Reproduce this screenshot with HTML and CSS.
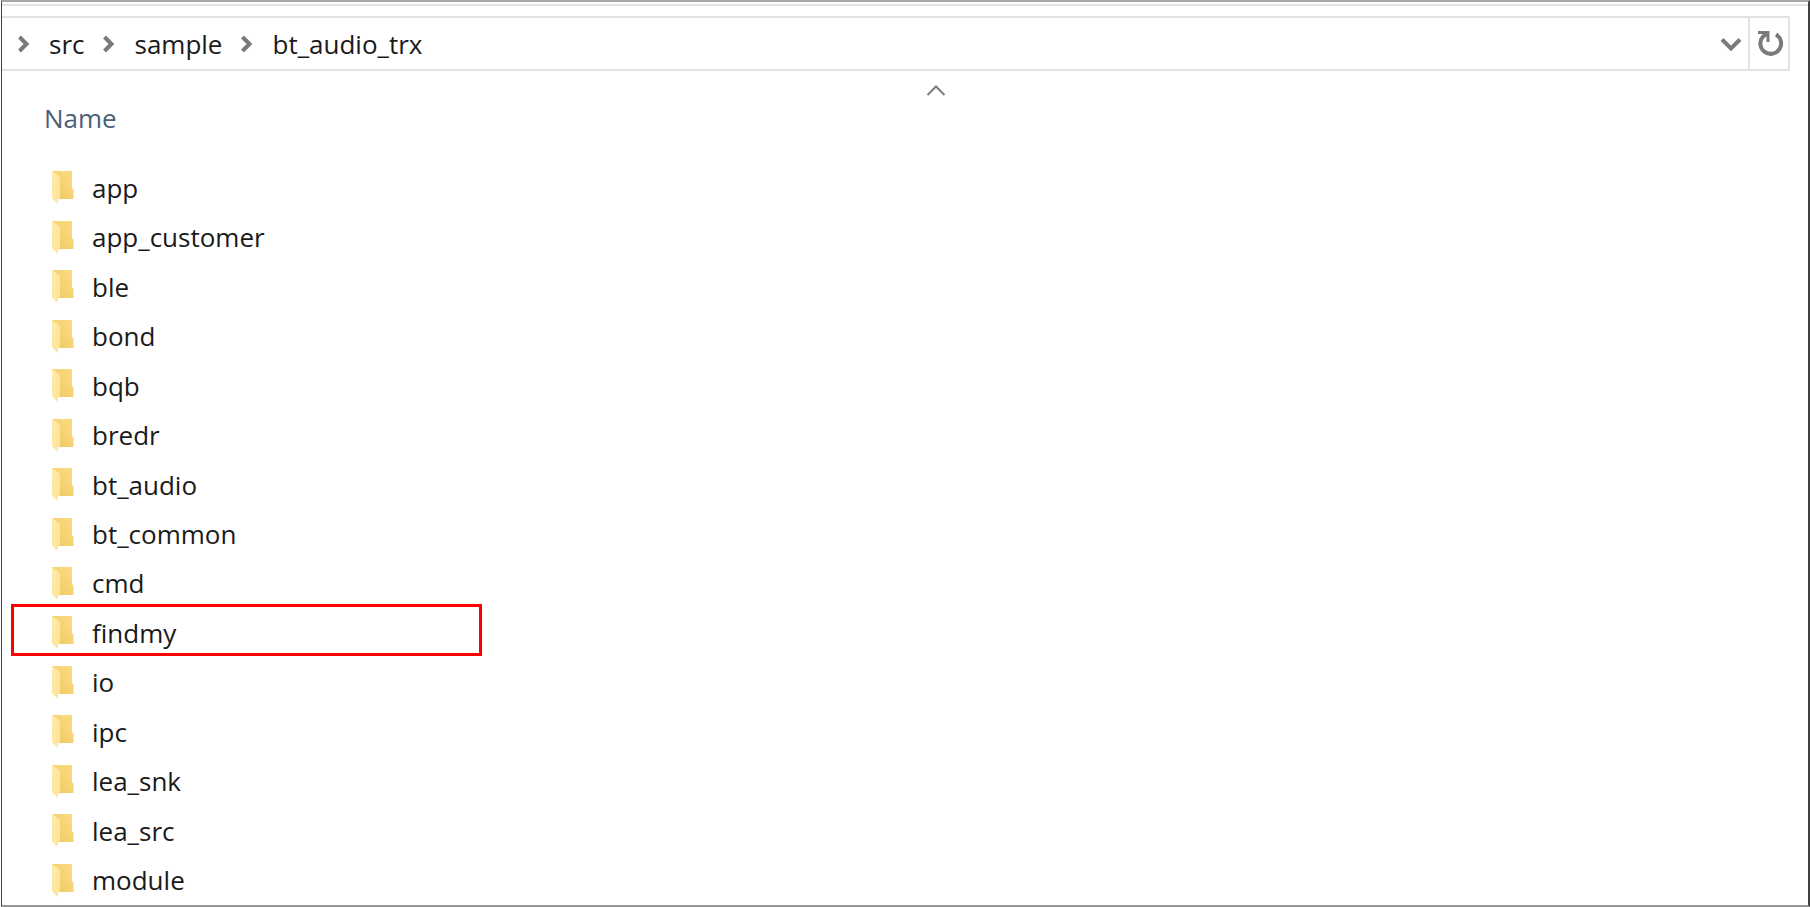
FILE: index.html
```html
<!DOCTYPE html>
<html lang="en">
<head>
    <meta charset="UTF-8">
    <meta name="viewport" content="width=device-width, initial-scale=1.0">
    <title>bt_audio_trx</title>
    <link rel="stylesheet" href="styles.css">
</head>
<body>
    <!-- Shared icons -->
    <svg class="sprite" aria-hidden="true">
        <defs>
            <linearGradient id="folder-back" x1="0" y1="1" x2="1" y2="0">
                <stop offset="0" stop-color="#edc55f"/>
                <stop offset="0.6" stop-color="#f7d577"/>
                <stop offset="1" stop-color="#fbdc82"/>
            </linearGradient>
            <linearGradient id="folder-front" x1="0" y1="0" x2="1" y2="1">
                <stop offset="0" stop-color="#ffeaa8"/>
                <stop offset="1" stop-color="#fde498"/>
            </linearGradient>
        </defs>
        <symbol id="folder" viewBox="0 0 22 33">
            <path fill="url(#folder-back)" d="M0 0h20v17l1.500 1.500V28H6L0 14z"/>
            <path fill="url(#folder-front)" d="M0 0l7 5q1 1 1 2.500V27l-2 1v5L1 28.500Q0 27.500 0 26z"/>
        </symbol>
        <symbol id="chevron" viewBox="0 0 12 18">
            <path fill="none" stroke="#7a7a7a" stroke-width="4" d="M1.500 2l7 7-7 7"/>
        </symbol>
    </svg>

    <div class="window">
        <div class="toolbar">
            <nav class="address" aria-label="Path">
                <svg class="chevron"><use href="#chevron"/></svg>
                <a class="crumb" href="#src">src</a>
                <svg class="chevron"><use href="#chevron"/></svg>
                <a class="crumb" href="#sample">sample</a>
                <svg class="chevron"><use href="#chevron"/></svg>
                <a class="crumb" href="#bt_audio_trx">bt_audio_trx</a>
                <button class="history" type="button" aria-label="Previous locations">
                    <svg width="22" height="16" viewBox="0 0 22 16"><path fill="none" stroke="#7a7a7a" stroke-width="4" d="M2 3.500l9 9 9-9"/></svg>
                </button>
            </nav>
            <button class="refresh" type="button" aria-label="Refresh">
                <svg width="26" height="26" viewBox="0 0 26 26">
                    <path fill="none" stroke="#7a7a7a" stroke-width="4" d="M18 3.500A10.400 10.400 0 1 1 5 5.500L8.500 3"/>
                    <path fill="none" stroke="#7a7a7a" stroke-width="3" d="M0 1.500h10V11"/>
                </svg>
            </button>
        </div>

        <button class="column-header" type="button">
            <svg class="sort" width="20" height="11" viewBox="0 0 20 11"><path fill="none" stroke="#7a7a7a" stroke-width="2" d="M1.500 10L10 1.500l8.500 8.500"/></svg>
            <span>Name</span>
        </button>

        <ul class="files">
            <li class="file"><svg class="folder"><use href="#folder"/></svg>app</li>
            <li class="file"><svg class="folder"><use href="#folder"/></svg>app_customer</li>
            <li class="file"><svg class="folder"><use href="#folder"/></svg>ble</li>
            <li class="file"><svg class="folder"><use href="#folder"/></svg>bond</li>
            <li class="file"><svg class="folder"><use href="#folder"/></svg>bqb</li>
            <li class="file"><svg class="folder"><use href="#folder"/></svg>bredr</li>
            <li class="file"><svg class="folder"><use href="#folder"/></svg>bt_audio</li>
            <li class="file"><svg class="folder"><use href="#folder"/></svg>bt_common</li>
            <li class="file"><svg class="folder"><use href="#folder"/></svg>cmd</li>
            <li class="file marked"><svg class="folder"><use href="#folder"/></svg>findmy</li>
            <li class="file"><svg class="folder"><use href="#folder"/></svg>io</li>
            <li class="file"><svg class="folder"><use href="#folder"/></svg>ipc</li>
            <li class="file"><svg class="folder"><use href="#folder"/></svg>lea_snk</li>
            <li class="file"><svg class="folder"><use href="#folder"/></svg>lea_src</li>
            <li class="file"><svg class="folder"><use href="#folder"/></svg>module</li>
        </ul>
    </div>
</body>
</html>
```

FILE: styles.css
```css
*,
*::after {
    margin: 0;
    padding: 0;
    box-sizing: border-box;
}

body {
    padding-left: 1px;
    font-family: 'Segoe UI', 'Open Sans', 'Noto Sans', sans-serif;
    font-size: 26px;
    line-height: 36px;
    color: #1a1a1a;
    background: #fff;
}

button {
    font: inherit;
    background: none;
    border: none;
}

.sprite {
    position: absolute;
    width: 0;
    height: 0;
}

.window {
    display: flex;
    flex-direction: column;
    min-height: 100vh;
    border: 2px solid #404040;
    border-left-width: 1px;
    border-top-color: #a8a8a8;
    border-bottom-color: #989898;
}

/* Address bar */
.toolbar {
    display: flex;
    height: 67px;
    margin-top: 2px;
    padding: 10px 18px 0 0;
    border-top: 2px solid #e2e2e2;
}

.address {
    flex: 1;
    display: flex;
    align-items: center;
    padding: 0 6px 0 16px;
    border: 2px solid #e2e2e2;
    border-left: none;
}

.chevron {
    width: 12px;
    height: 18px;
}

.crumb {
    margin: 0 19px;
    color: inherit;
    text-decoration: none;
}

.history {
    display: flex;
    margin-left: auto;
}

.refresh {
    display: flex;
    align-items: center;
    justify-content: flex-end;
    width: 40px;
    padding-right: 4px;
    border: 2px solid #e2e2e2;
    border-left: none;
}

/* Column header */
.column-header {
    display: flex;
    flex-direction: column;
    height: 92px;
    padding: 14px 0 0 42px;
    color: #4c607a;
    text-align: left;
}

.sort {
    align-self: center;
    margin: 0 0 4px 20px;
}

/* Folder list */
.files {
    flex: 1;
    display: flex;
    flex-direction: column;
    list-style: none;
}

.file {
    position: relative;
    flex: 1;
    display: flex;
    align-items: center;
    gap: 18px;
    padding-left: 50px;
}

.folder {
    width: 22px;
    height: 33px;
}

.marked::after {
    content: '';
    position: absolute;
    top: -4px;
    left: 9px;
    width: 471px;
    height: 52px;
    border: 3px solid #f00;
}
```
